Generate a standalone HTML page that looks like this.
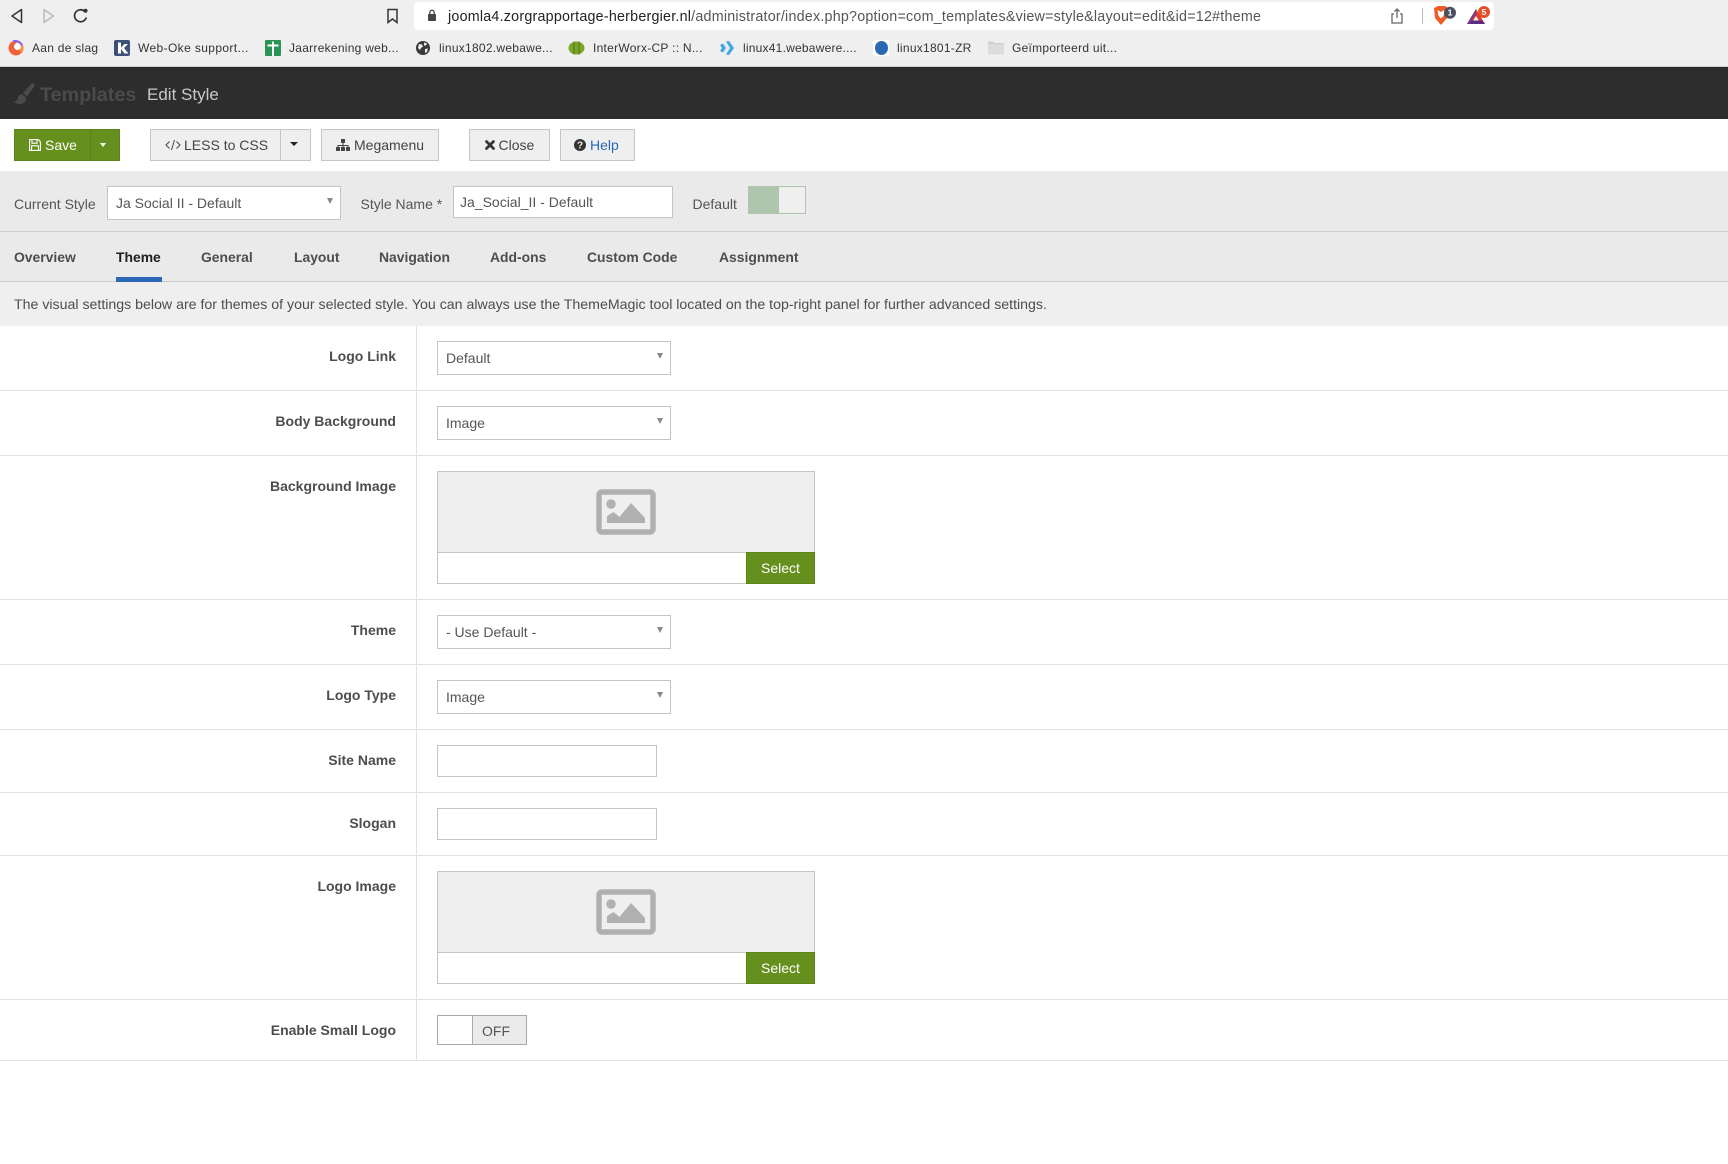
<!DOCTYPE html>
<html lang="en"><head><meta charset="utf-8"><title>Templates: Edit Style</title>
<style>
html,body{margin:0;padding:0;background:#fff}
body{position:relative;width:1728px;height:1164px;overflow:hidden;font-family:"Liberation Sans",sans-serif;color:#555;font-size:14px}
.a{position:absolute;box-sizing:border-box}
.t{position:absolute;white-space:nowrap;line-height:20px;height:20px}
.b{font-weight:700}
.lb{position:absolute;right:1332px;white-space:nowrap;line-height:20px;height:20px;font-weight:700;color:#4d4d4d;font-size:14px}
.bm{position:absolute;top:38px;line-height:20px;height:20px;white-space:nowrap;color:#333;font-size:12px;letter-spacing:.27px}
.btn{position:absolute;box-sizing:border-box;background:#efefef;border:1.5px solid #c6c6c6}
.sel{position:absolute;box-sizing:border-box;left:437px;width:234px;height:34px;background:#fff;border:1.5px solid #c4c4c4}
.sel i{position:absolute;right:7px;top:11px;width:0;height:0;border-left:3.5px solid transparent;border-right:3.5px solid transparent;border-top:6px solid #888}
.sel span{position:absolute;left:8px;top:6px;line-height:20px;white-space:nowrap}
.ln{position:absolute;left:0;width:1728px;height:1px;background:#e0e0e0}
.inp{position:absolute;box-sizing:border-box;left:437px;width:220px;height:32px;background:#fff;border:1.5px solid #c4c4c4}
.tab{position:absolute;top:247px;line-height:20px;white-space:nowrap;font-weight:700;color:#4d4d4d;font-size:13.9px}
.g{position:absolute;box-sizing:border-box;background:#65901d;border:1px solid #5c8519;color:#fff;text-align:center}
</style></head><body>

<!-- browser chrome -->
<div class="a" style="left:0;top:0;width:1728px;height:67px;background:#efefef;border-bottom:1px solid #cfcfd6"></div>
<svg class="a" style="left:9px;top:6px" width="84" height="20" viewBox="0 0 84 20" fill="none">
<path d="M12.5 3.5v13L3 10z" stroke="#333" stroke-width="1.5" stroke-linejoin="round"/>
<path d="M35 3.5v13L44.5 10z" stroke="#bbb" stroke-width="1.5" stroke-linejoin="round"/>
<path d="M75.5 5.2a6 6 0 1 0 1.8 6.3" stroke="#333" stroke-width="1.7"/><circle cx="76.5" cy="4.8" r="2" fill="#333"/>
</svg>
<svg class="a" style="left:386px;top:8px" width="13" height="16" viewBox="0 0 13 16" fill="none"><path d="M2 1.500h9v13l-4.500-3.500-4.500 3.500z" stroke="#333" stroke-width="1.500"/></svg>
<div class="a" style="left:414px;top:2px;width:1080px;height:28px;background:#fff;border-radius:4px"></div>
<svg class="a" style="left:427px;top:9px" width="10" height="13" viewBox="0 0 10 13"><rect x="1" y="5" width="8" height="7" rx="1" fill="#444"/><path d="M2.800 5.500V3.500a2.200 2.200 0 0 1 4.400 0v2" fill="none" stroke="#444" stroke-width="1.300"/></svg>
<div class="t" style="left:448px;top:7px;font-size:14.3px;color:#555;letter-spacing:.22px"><span style="color:#222">joomla4.zorgrapportage-herbergier.nl</span>/administrator/index.php?option=com_templates&amp;view=style&amp;layout=edit&amp;id=12#theme</div>
<svg class="a" style="left:1389px;top:7px" width="16" height="18" viewBox="0 0 16 18" fill="none"><path d="M5 7H3v9h10V7h-2M8 11V2M5.500 4.500 8 2l2.500 2.500" stroke="#666" stroke-width="1.300"/></svg>
<div class="a" style="left:1422px;top:8px;width:1px;height:16px;background:#bbb"></div>
<svg class="a" style="left:1432px;top:5px" width="26" height="22" viewBox="0 0 26 22"><path d="M2 3l4-2h7l3 2-1 10-6 7-6-7z" fill="#f05a23"/><path d="M5.500 5l3.500 2 3.500-2-1 6-2.500 2.500L6.500 11z" fill="#fff"/><circle cx="18" cy="7.700" r="6" fill="#4a5060"/><text x="18" y="10.700" font-size="8.500" font-weight="700" fill="#fff" text-anchor="middle" font-family="Liberation Sans">1</text></svg>
<svg class="a" style="left:1466px;top:5px" width="26" height="22" viewBox="0 0 26 22"><path d="M10 4 1 19h18z" fill="#d8402c"/><path d="M10 11 6.500 16.500h7z" fill="#efefef"/><path d="M1 19l2.500-3.500h13L19 19z" fill="#5b2c86"/><path d="M10 4 1 19l2.500 0L10 9z" fill="#7a3a8a"/><circle cx="18" cy="7" r="6" fill="#e8502a"/><text x="18" y="10" font-size="8.500" font-weight="700" fill="#fff" text-anchor="middle" font-family="Liberation Sans">5</text></svg>

<!-- bookmarks -->
<svg class="a" style="left:8px;top:40px" width="16" height="16" viewBox="0 0 16 16"><circle cx="8" cy="8" r="7.500" fill="#f2623a"/><path d="M8 1a7 7 0 0 1 7 7 6 6 0 0 1-3 5c1-3 0-7-4-7z" fill="#f6a02d"/><circle cx="9.500" cy="6.500" r="3.500" fill="#fff"/><path d="M5 1.500a7 7 0 0 1 9 4" fill="none" stroke="#8a5cf0" stroke-width="2"/></svg>
<div class="bm" style="left:32px">Aan de slag</div>
<svg class="a" style="left:114px;top:40px" width="16" height="16" viewBox="0 0 16 16"><rect width="16" height="16" rx="2" fill="#3d5078"/><path d="M4 2.500h3v5l3.500-3.500H14l-4 4 4.500 5.500h-4L7 9v4.500H4z" fill="#fff"/></svg>
<div class="bm" style="left:138px;letter-spacing:.38px">Web-Oke support...</div>
<svg class="a" style="left:265px;top:40px" width="16" height="16" viewBox="0 0 16 16"><rect width="16" height="16" rx="1" fill="#2a9455"/><path d="M7 1.500h2V4.500h4.500v2H9V16H7V6.500H2.500v-2H7z" fill="#fff"/></svg>
<div class="bm" style="left:289px">Jaarrekening web...</div>
<svg class="a" style="left:416px;top:41px" width="14" height="14" viewBox="0 0 14 14"><circle cx="7" cy="7" r="7" fill="#3a3a3a"/><path d="M3 3l3 .5 1 2-2 1.500-1 2-2-2zM8 1.500l3 1-1 2H8zM9 8l3-.5-1 3.500-2 1z" fill="#efefef"/></svg>
<div class="bm" style="left:439px">linux1802.webawe...</div>
<svg class="a" style="left:568px;top:41px" width="17" height="14" viewBox="0 0 17 14"><ellipse cx="8.500" cy="7" rx="8" ry="6.500" fill="#7ba428"/><path d="M6 .5v13M11 .5v13" stroke="#4f7310" stroke-width="1"/></svg>
<div class="bm" style="left:593px">InterWorx-CP :: N...</div>
<svg class="a" style="left:720px;top:41px" width="14" height="14" viewBox="0 0 14 14"><path d="M0 4l3-1.500L6 7l-3 4.500L0 10l2-3zM6 .5 9 0l5 7-5 7-3-.5L10 7z" fill="#43a4e6"/></svg>
<div class="bm" style="left:743px;letter-spacing:.22px">linux41.webawere....</div>
<div class="a" style="left:873px;top:40px;width:16px;height:16px;background:#fff"></div>
<div class="a" style="left:875px;top:41px;width:13px;height:14px;border-radius:50%;background:#2a6ab5"></div>
<div class="bm" style="left:897px">linux1801-ZR</div>
<svg class="a" style="left:988px;top:41px" width="16" height="14" viewBox="0 0 16 14"><path d="M0 2q0-1.500 1.500-1.500h3L6 2h8.500Q16 2 16 3v9.500q0 1-1.500 1h-13Q0 13.500 0 12.500z" fill="#cfcfcf"/><rect y="3" width="16" height="10.500" rx="1" fill="#dcdcdc"/></svg>
<div class="bm" style="left:1012px">Geïmporteerd uit...</div>

<!-- header -->
<div class="a" style="left:0;top:67px;width:1728px;height:52px;background:#2d2d2d"></div>
<svg class="a" style="left:14px;top:83px" width="21" height="21" viewBox="0 0 21 21"><path d="M20 .8c.8.7.7 1.900 0 2.900l-7 9.800-4-3.400L17 1c.9-.8 2.200-.9 3-.2zM8 11.200l4 3.400c.2 3.700-2.300 6.400-6 6.400-2.500 0-5-.9-6-2.300 2 0 3-.8 3.500-2.800.5-2.700 2.200-4.500 4.500-4.700z" fill="#4b4b4b"/></svg>
<div class="t b" style="left:40px;top:84px;font-size:19.8px;line-height:22px;height:22px;color:#4b4b4b">Templates</div>
<div class="t" style="left:147px;top:84px;font-size:17px;line-height:22px;height:22px;color:#c9c9c9">Edit Style</div>

<!-- toolbar -->
<div class="g" style="left:14px;top:129px;width:106px;height:32px"></div>
<div class="a" style="left:90px;top:130px;width:1px;height:30px;background:#5a8219"></div>
<svg class="a" style="left:29px;top:139px" width="12" height="12" viewBox="0 0 12 12" fill="none" stroke="#fff" stroke-width="1.100"><path d="M.6.6h8.600l2.200 2.200v8.600H.6zM3 .8v3.400h5V.8M2.600 11V6.800h6.800V11"/></svg>
<div class="t" style="left:45px;top:135px;color:#fff">Save</div>
<div class="a" style="left:100px;top:143px;width:0;height:0;border-left:3.500px solid transparent;border-right:3.500px solid transparent;border-top:4px solid #fff"></div>

<div class="btn" style="left:150px;top:129px;width:161px;height:32px"></div>
<div class="a" style="left:280px;top:130px;width:1px;height:30px;background:#c6c6c6"></div>
<svg class="a" style="left:165px;top:139px" width="16" height="12" viewBox="0 0 16 12" fill="none" stroke="#444" stroke-width="1"><path d="M4.500 2.500 1 6l3.500 3.500M11.500 2.500 15 6l-3.500 3.500M9.500 1 6.500 11"/></svg>
<div class="t" style="left:184px;top:135px;color:#444">LESS to CSS</div>
<div class="a" style="left:290px;top:142px;width:0;height:0;border-left:4px solid transparent;border-right:4px solid transparent;border-top:4px solid #222"></div>

<div class="btn" style="left:321px;top:129px;width:118px;height:32px"></div>
<svg class="a" style="left:336px;top:139px" width="14" height="12" viewBox="0 0 14 12" fill="#444"><rect x="5" y="0" width="4" height="4" rx=".5"/><rect x="0" y="8" width="4" height="4" rx=".5"/><rect x="5" y="8" width="4" height="4" rx=".5"/><rect x="10" y="8" width="4" height="4" rx=".5"/><path d="M6.500 4h1v2H12.500v2h-1V7H7.500v1h-1V7H2.500v1h-1V6h5z"/></svg>
<div class="t" style="left:354px;top:135px;color:#444">Megamenu</div>

<div class="btn" style="left:469px;top:129px;width:81px;height:32px"></div>
<svg class="a" style="left:484.500px;top:140px" width="10" height="10" viewBox="0 0 10 10"><path d="M1.500 1.500l7 7M8.500 1.500l-7 7" stroke="#333" stroke-width="2.700" stroke-linecap="round"/></svg>
<div class="t" style="left:498.500px;top:135px;color:#444">Close</div>

<div class="btn" style="left:560px;top:129px;width:75px;height:32px"></div>
<svg class="a" style="left:574px;top:139px" width="12" height="12" viewBox="0 0 12 12"><circle cx="6" cy="6" r="6" fill="#333"/><text x="6" y="9.500" font-size="10" font-weight="700" fill="#efefef" text-anchor="middle" font-family="Liberation Sans">?</text></svg>
<div class="t" style="left:590px;top:135px;color:#2a69b8">Help</div>

<!-- style bar -->
<div class="a" style="left:0;top:171px;width:1728px;height:61px;background:#eaeaea;border-bottom:1.500px solid #ccc"></div>
<div class="t" style="left:14px;top:194px">Current Style</div>
<div class="sel" style="left:107px;top:186px;height:34px"><i></i><span>Ja Social II - Default</span></div>
<div class="t" style="left:360.500px;top:194px">Style Name *</div>
<div class="a" style="left:453px;top:186px;width:220px;height:32px;background:#fff;border:1.500px solid #c4c4c4"></div>
<div class="t" style="left:460px;top:192px">Ja_Social_II - Default</div>
<div class="t" style="left:692.500px;top:194px">Default</div>
<div class="a" style="left:748px;top:186px;width:58px;height:28px;background:#efefef;border:1px solid #afc6ae"></div>
<div class="a" style="left:748px;top:186px;width:31px;height:28px;background:#afc6ae"></div>

<!-- tabs -->
<div class="a" style="left:0;top:232px;width:1728px;height:50px;background:#eaeaea;border-bottom:1.500px solid #ccc"></div>
<div class="tab" style="left:14px">Overview</div>
<div class="tab" style="left:116px;color:#1f1f1f">Theme</div>
<div class="a" style="left:116px;top:277px;width:46px;height:5px;background:#2a69b8"></div>
<div class="tab" style="left:201px">General</div>
<div class="tab" style="left:294px">Layout</div>
<div class="tab" style="left:379px">Navigation</div>
<div class="tab" style="left:490px">Add-ons</div>
<div class="tab" style="left:587px">Custom Code</div>
<div class="tab" style="left:719px">Assignment</div>

<!-- description -->
<div class="a" style="left:0;top:282px;width:1728px;height:44px;background:#efefef"></div>
<div class="t" style="left:14px;top:295px;color:#4d4d4d;font-size:14.16px">The visual settings below are for themes of your selected style. You can always use the ThemeMagic tool located on the top-right panel for further advanced settings.</div>

<!-- form grid -->
<div class="a" style="left:416px;top:326px;width:1px;height:735px;background:#e0e0e0"></div>
<div class="ln" style="top:390px"></div>
<div class="ln" style="top:455px"></div>
<div class="ln" style="top:599px"></div>
<div class="ln" style="top:664px"></div>
<div class="ln" style="top:729px"></div>
<div class="ln" style="top:792px"></div>
<div class="ln" style="top:855px"></div>
<div class="ln" style="top:999px"></div>
<div class="ln" style="top:1060px"></div>

<div class="lb" style="top:346px">Logo Link</div>
<div class="sel" style="top:341px"><i></i><span>Default</span></div>
<div class="lb" style="top:411px">Body Background</div>
<div class="sel" style="top:406px"><i></i><span>Image</span></div>

<div class="lb" style="top:476px">Background Image</div>
<div class="a" style="left:437px;top:471px;width:378px;height:82px;background:#efefef;border:1.500px solid #c4c4c4"></div>
<svg class="a" style="left:596px;top:489px" width="60" height="46" viewBox="0 0 60 46"><rect x="3" y="3" width="54" height="40" rx="3" fill="none" stroke="#b0b0b0" stroke-width="5.500"/><circle cx="15" cy="15" r="4.800" fill="#b0b0b0"/><path d="M11 34V27l6.500-4 6 5L35 14l14 15v5z" fill="#b0b0b0"/></svg>
<div class="a" style="left:437px;top:552px;width:310px;height:32px;background:#fff;border:1.500px solid #c4c4c4"></div>
<div class="g" style="left:746px;top:552px;width:69px;height:32px"></div>
<div class="t" style="left:761px;top:558px;color:#fff">Select</div>

<div class="lb" style="top:620px">Theme</div>
<div class="sel" style="top:615px"><i></i><span>- Use Default -</span></div>
<div class="lb" style="top:685px">Logo Type</div>
<div class="sel" style="top:680px"><i></i><span>Image</span></div>
<div class="lb" style="top:750px">Site Name</div>
<div class="inp" style="top:745px"></div>
<div class="lb" style="top:813px">Slogan</div>
<div class="inp" style="top:808px"></div>

<div class="lb" style="top:876px">Logo Image</div>
<div class="a" style="left:437px;top:871px;width:378px;height:82px;background:#efefef;border:1.500px solid #c4c4c4"></div>
<svg class="a" style="left:596px;top:889px" width="60" height="46" viewBox="0 0 60 46"><rect x="3" y="3" width="54" height="40" rx="3" fill="none" stroke="#b0b0b0" stroke-width="5.500"/><circle cx="15" cy="15" r="4.800" fill="#b0b0b0"/><path d="M11 34V27l6.500-4 6 5L35 14l14 15v5z" fill="#b0b0b0"/></svg>
<div class="a" style="left:437px;top:952px;width:310px;height:32px;background:#fff;border:1.500px solid #c4c4c4"></div>
<div class="g" style="left:746px;top:952px;width:69px;height:32px"></div>
<div class="t" style="left:761px;top:958px;color:#fff">Select</div>

<div class="lb" style="top:1020px">Enable Small Logo</div>
<div class="a" style="left:437px;top:1015px;width:90px;height:30px;background:#ebebeb;border:1.500px solid #a8a8a8"></div>
<div class="a" style="left:437px;top:1015px;width:36px;height:30px;background:#fff;border:1.500px solid #a8a8a8"></div>
<div class="t" style="left:482px;top:1021px">OFF</div>
</body></html>
